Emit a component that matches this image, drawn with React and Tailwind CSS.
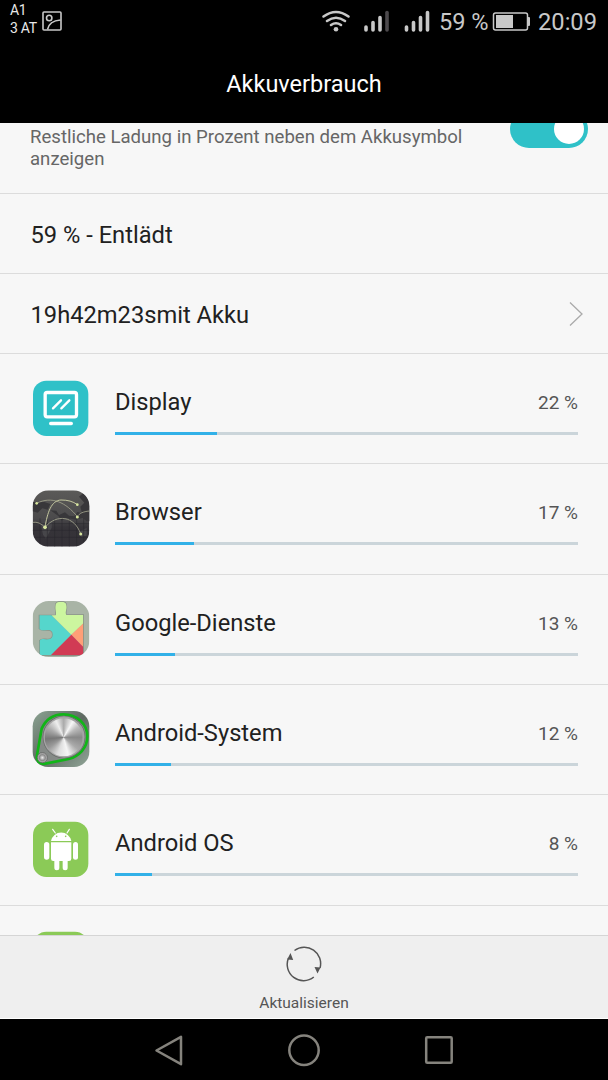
import React from 'react';

const DisplayIcon = () => (
    <svg className="h-[58px] w-[58px]" viewBox="36 30 174 174" fill="none">
        <rect x="39" y="32" width="166" height="166" rx="40" fill="#2fc1c8" />
        <rect x="75.5" y="67.5" width="94" height="73" rx="6" stroke="#fff" strokeWidth="10" />
        <path d="M99 115l24-24M124 115l24-24" stroke="#fff" strokeLinecap="round" strokeWidth="7" />
        <path d="M92 160.500h62" stroke="#fff" strokeLinecap="round" strokeWidth="10" />
    </svg>
);

const BrowserIcon = () => (
    <svg className="h-[58px] w-[58px]" viewBox="36 30 174 174" fill="none">
        <defs>
            <linearGradient id="browserBg" x1="0" y1="0" x2="0" y2="1">
                <stop offset="0" stopColor="#5b5a58" />
                <stop offset="0.5" stopColor="#4b4a4c" />
                <stop offset="0.65" stopColor="#363439" />
                <stop offset="1" stopColor="#343137" />
            </linearGradient>
            <clipPath id="browserClip">
                <rect x="38" y="31" width="170" height="169" rx="48" />
            </clipPath>
        </defs>
        <g clipPath="url(#browserClip)">
            <rect x="38" y="31" width="170" height="169" fill="url(#browserBg)" />
            <path d="M38 66h35l18 6-8 17-16-4-14 13-15-4zM91 91l18 1 8 13 18-8 12 10 16 2 9-13 14 4-5-20 12-12-16-18 12-10 29 20v64h-18l-12-10-21 5-14-3-16-2-12 8-10-14z" fill="#38373a" />
            <path d="M65 119l32 4-2 20-17 33-9-12-5-24zM178 154l22-10v23l-17 3z" fill="#47464a" />
            <path d="M60 115v85M82 120v80M104 115v85M126 115v85M148 115v85M170 115v85M191 115v85M38 131h170M38 151h170M38 172h170" stroke="#29272c" strokeWidth="1.500" />
            <path d="M38 127q20-3 37 15M50 70c45-23 88-3 122 40M75 142c35-42 89-34 107 20M172 110c6-10 17-15 36-17" stroke="#a3a58e" strokeWidth="2.500" />
            <path d="M75 142C82 98 94 61 123 60c20 0 36 4 49 14" stroke="#c5c8a0" strokeWidth="3" />
            <g fill="#d9e8a0">
                <circle cx="50" cy="70" r="4" />
                <circle cx="172" cy="74" r="4" />
                <circle cx="172" cy="111" r="4.500" />
                <circle cx="182" cy="162" r="4.500" />
                <circle cx="75" cy="142" r="5.500" />
            </g>
        </g>
    </svg>
);

const GoogleServicesIcon = () => (
    <svg className="h-[58px] w-[58px]" viewBox="36 33 174 174" fill="none">
        <defs>
            <clipPath id="puzzleClip">
                <path d="M58 76H107C111 66 104 61 107 44Q108 35 123 35Q139 35 139 46C142 60 134 66 139 75H190V196H59V152C66 144 75 149 84 148Q98 147 98 134Q98 120 85 120C74 119 65 124 58 116Z" />
            </clipPath>
            <clipPath id="servicesClip">
                <rect x="38" y="33" width="170" height="168" rx="48" />
            </clipPath>
        </defs>
        <g clipPath="url(#servicesClip)">
            <rect x="38" y="33" width="170" height="170" fill="#a9b4a6" />
            <path d="M58 76H107C111 66 104 61 107 44Q108 35 123 35Q139 35 139 46C142 60 134 66 139 75H190V196H59V152C66 144 75 149 84 148Q98 147 98 134Q98 120 85 120C74 119 65 124 58 116Z" stroke="#8a9488" strokeWidth="4" />
            <g clipPath="url(#puzzleClip)">
                <path d="M36 30H94V76L154 134 92 198H36z" fill="#55d6cc" />
                <path d="M74 55V30H192V98L154 134z" fill="#ccf69f" />
                <path d="M192 98V173L154 134z" fill="#ff9f77" />
                <path d="M154 134L192 173V198H90z" fill="#d13b54" />
            </g>
        </g>
    </svg>
);

const KnobFace = () => (
    <div className="h-full w-full rounded-full bg-[conic-gradient(from_0deg,#aaa,#f7f7f7_30deg,#bbb_55deg,#888_90deg,#aaa_130deg,#f5f5f5_165deg,#ddd_200deg,#999_235deg,#777_265deg,#aaa_300deg,#eee_335deg,#aaa)]" />
);

const AndroidSystemIcon = () => (
    <svg className="h-[58px] w-[58px]" viewBox="36 33 174 174" fill="none">
        <defs>
            <linearGradient id="systemBg" x1="0" y1="0" x2="1" y2="1">
                <stop offset="0" stopColor="#8ca493" />
                <stop offset="0.5" stopColor="#5e6961" />
                <stop offset="1" stopColor="#91a698" />
            </linearGradient>
            <radialGradient id="smallKnob">
                <stop offset="0" stopColor="#eee" />
                <stop offset="0.6" stopColor="#888" />
                <stop offset="1" stopColor="#c5c5c5" />
            </radialGradient>
        </defs>
        <rect x="38" y="33" width="170" height="168" rx="46" fill="url(#systemBg)" />
        <path d="M65 86C78 57 98 43 130 43C171 43 202 73 202 109C202 145 177 168 146 177L76 191C58 194 48 182 51 166Z" fill="#858a87" stroke="#11b518" strokeWidth="8" />
        <circle cx="132" cy="111" r="64" fill="#666967" />
        <circle cx="132" cy="111" r="62" fill="#a4a4a4" />
        <foreignObject x="74" y="55" width="114" height="114">
            <KnobFace />
        </foreignObject>
        <circle cx="67" cy="173" r="15" fill="url(#smallKnob)" stroke="#555" strokeWidth="2" />
    </svg>
);

const AndroidIcon = () => (
    <svg className="h-[58px] w-[58px]" viewBox="36 33 174 174" fill="none">
        <rect x="39" y="35" width="166" height="166" rx="40" fill="#8bca57" />
        <g fill="#fff">
            <path d="M93 93a31 31 0 0 1 61 0z" />
            <path d="M93 97h61v49q0 7-7 7h-4v20a7 7 0 0 1-15 0v-20h-10v20a7 7 0 0 1-15 0v-20h-3q-7 0-7-7z" />
            <rect x="72" y="96" width="16" height="53" rx="8" />
            <rect x="159" y="96" width="15" height="53" rx="7.500" />
        </g>
        <path d="M106 69l-8-11M141 69l7-11" stroke="#fff" strokeWidth="3.500" strokeLinecap="round" />
        <circle cx="110" cy="79" r="2.500" fill="#8bca57" />
        <circle cx="137" cy="79" r="2.500" fill="#8bca57" />
    </svg>
);

const apps = [
    { name: 'Display', percent: 22, icon: DisplayIcon, height: 'h-[110px]' },
    { name: 'Browser', percent: 17, icon: BrowserIcon, height: 'h-[111px]' },
    { name: 'Google-Dienste', percent: 13, icon: GoogleServicesIcon, height: 'h-[110px]' },
    { name: 'Android-System', percent: 12, icon: AndroidSystemIcon, height: 'h-[110px]' },
    { name: 'Android OS', percent: 8, icon: AndroidIcon, height: 'h-[111px]' },
];

const AppRow = ({ app }) => {
    const Icon = app.icon;
    return (
        <li className={`flex shrink-0 border-b border-[#dcdcdc] pt-[26px] pr-[30px] pl-8 ${app.height}`}>
            <Icon />
            <div className="ml-[25px] flex-1 pt-1.5">
                <div className="flex h-8 items-center justify-between">
                    <span className="text-[23.7px] leading-8 text-[#212121]">{app.name}</span>
                    <span className="pt-0.5 text-[19px] text-[#555]">{app.percent} %</span>
                </div>
                <div className="mt-3.5 h-[3px] bg-[#cbd5da]">
                    <div className="h-full bg-[#32b1e8]" style={{ width: `${app.percent}%` }} />
                </div>
            </div>
        </li>
    );
};

const StatusBar = () => (
    <div className="flex h-11 items-start text-[#c8c8c8]">
        <div className="w-[31px] shrink-0 pt-px pl-2.5 text-[14px] leading-[18px] tracking-[-0.3px] whitespace-nowrap text-[#e8e8e8]">
            <div>A1</div>
            <div>3 AT</div>
        </div>
        <svg className="mt-[11px] ml-[11px] h-5 w-5 shrink-0" viewBox="0 0 20 20" fill="none" stroke="currentColor" strokeWidth="1.600">
            <rect x="1" y="1" width="18" height="18" rx="1" />
            <circle cx="7.200" cy="7" r="2.700" />
            <path d="M5.500 18.500c1-5 5-9 13-9.500" />
        </svg>
        <svg className="ml-[259px] h-11 w-[110px] shrink-0" viewBox="321 0 110 44" fill="none" stroke="currentColor" strokeLinecap="round">
            <g strokeWidth="2.600">
                <path d="M323.500 16.500q12.500-9 25 0M327 21q9-6.500 18 0M331 25q5-3.500 10 0" />
            </g>
            <circle cx="336" cy="29.300" r="2.300" fill="currentColor" stroke="none" />
            <g strokeWidth="3.600">
                <path d="M366 27v3M373 22.500v7.500M380 17.500v12.500" />
                <path d="M387 12.500v17.500" stroke="#4c494c" />
                <path d="M406.500 27v3M413.500 22.500v7.500M420.500 17.500v12.500M427.500 12.500v17.500" />
            </g>
        </svg>
        <span className="ml-2 w-[51px] shrink-0 text-[23.600px] leading-[44px] whitespace-nowrap">59 %</span>
        <svg className="ml-0.5 h-11 w-[38px] shrink-0" viewBox="492 0 38 44" fill="none">
            <rect x="493.500" y="13" width="34" height="17" rx="2" stroke="currentColor" strokeWidth="1.500" />
            <rect x="496" y="15" width="17" height="13" fill="currentColor" />
            <rect x="527.500" y="17" width="2.500" height="9" rx="1" fill="currentColor" />
        </svg>
        <span className="ml-2 text-[23.700px] leading-[44px]">20:09</span>
    </div>
);

const Toggle = () => (
    <div className="-mt-[13px] flex h-[38px] w-[78px] shrink-0 justify-end rounded-full bg-[#2fc1c8] p-1">
        <div className="h-[30px] w-[30px] rounded-full bg-white" />
    </div>
);

const NavBar = () => (
    <nav className="flex h-[61px] shrink-0 items-center justify-center gap-[101px] bg-black">
        <svg className="h-[34px] w-[34px]" viewBox="0 0 34 34" fill="none" stroke="#85837d" strokeWidth="2.500" strokeLinejoin="round">
            <path d="M4.500 17.500L29 3.800V31.200z" />
        </svg>
        <svg className="h-[34px] w-[34px]" viewBox="0 0 34 34" fill="none" stroke="#85837d" strokeWidth="2.500">
            <circle cx="17" cy="17.200" r="14.700" />
        </svg>
        <svg className="h-[34px] w-[34px]" viewBox="0 0 34 34" fill="none" stroke="#85837d" strokeWidth="2.500">
            <rect x="4.200" y="4.300" width="25.500" height="25.500" rx="1" />
        </svg>
    </nav>
);

const App = () => {
    return (
        <div className="flex h-[1080px] w-[608px] flex-col overflow-hidden bg-[#f7f7f7] font-[Roboto,sans-serif]">
            <header className="h-[123px] shrink-0 bg-black">
                <StatusBar />
                <h1 className="pt-px text-center text-[23.500px] leading-[79px] text-white">Akkuverbrauch</h1>
            </header>

            <main className="flex min-h-0 flex-1 flex-col overflow-hidden">
                <section className="flex h-[71px] shrink-0 justify-between border-b border-[#dcdcdc] pr-5 pl-[30px]">
                    <p className="w-[450px] pt-[3px] text-[18.600px] leading-[22px] text-[#666]">
                        Restliche Ladung in Prozent neben dem Akkusymbol anzeigen
                    </p>
                    <Toggle />
                </section>
                <section className="flex h-20 shrink-0 border-b border-[#dcdcdc] pt-[25px] pl-[30.5px] text-[23.700px] leading-8 text-[#212121]">
                    59 % - Entlädt
                </section>
                <section className="flex h-20 shrink-0 justify-between border-b border-[#dcdcdc] pt-[25px] pr-[25px] pl-[30.5px] text-[23.700px] leading-8 text-[#212121]">
                    <span>19h42m23smit Akku</span>
                    <svg className="mt-[3px] h-6 w-3.5" viewBox="0 0 14 24" fill="none" stroke="#aaa" strokeWidth="1.300">
                        <path d="M1 0.500l12 11.500L1 23.500" />
                    </svg>
                </section>
                <ul className="flex flex-col">
                    {apps.map(app => <AppRow key={app.name} app={app} />)}
                    <li className="-mt-px shrink-0 pt-[26px] pl-8">
                        <AndroidIcon />
                    </li>
                </ul>
            </main>

            <footer className="flex h-[84px] shrink-0 flex-col items-center border-t border-b border-t-[#d5d5d5] border-b-white bg-[#efefef] pt-2.5 text-[#555]">
                <svg className="h-9 w-9" viewBox="0 0 36 36" fill="none" stroke="currentColor" strokeWidth="1.500">
                    <path d="M8.500 4.500A16.300 16.300 0 0 1 34 22M27.800 31A16.300 16.300 0 0 1 2.500 12" />
                    <path d="M4.500 7l2.700 7-6-.5zM31.500 27.500L28.500 21l6 .500z" fill="currentColor" stroke="none" />
                </svg>
                <span className="mt-[9px] text-[15.500px] leading-6">Aktualisieren</span>
            </footer>
            <NavBar />
        </div>
    );
};

export default App;
